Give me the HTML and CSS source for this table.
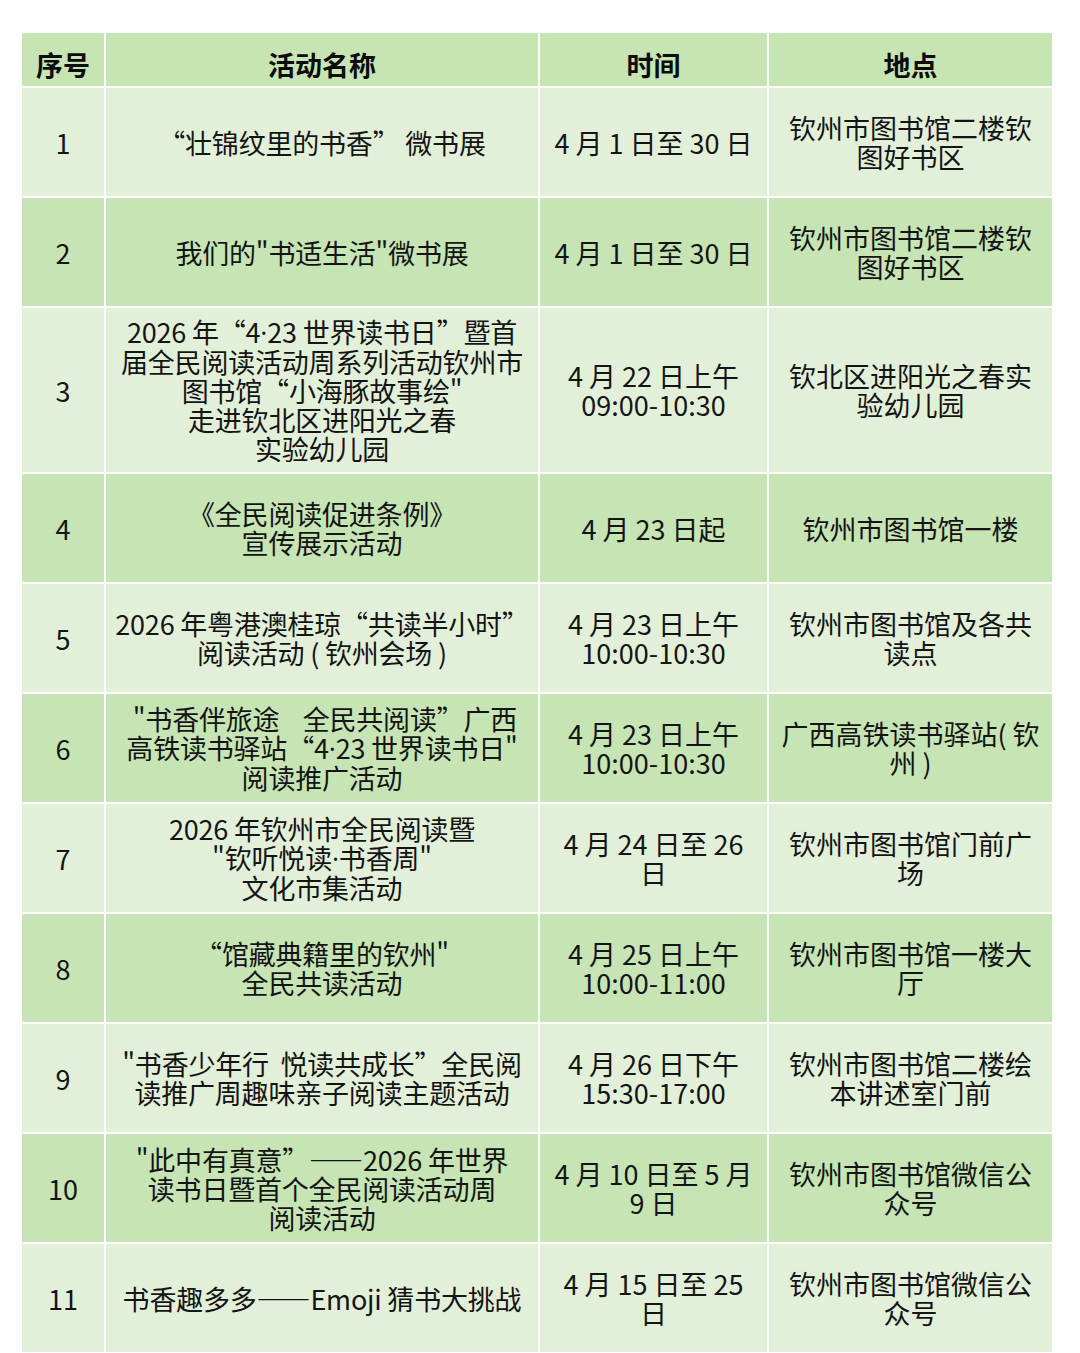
FILE: index.html
```html
<!DOCTYPE html>
<html lang="zh-CN">
<head>
<meta charset="utf-8">
<link rel="stylesheet" href="styles.css">
</head>
<body>
<table class="events">
  <colgroup>
    <col class="c-no"><col class="c-name"><col class="c-time"><col class="c-place">
  </colgroup>
  <thead>
    <tr class="head"><th>序号</th><th>活动名称</th><th>时间</th><th>地点</th></tr>
  </thead>
  <tbody>
    <tr class="light"><td>1</td><td>“壮锦纹里的书香”&nbsp;微书展</td><td>4 月 1 日至 30 日</td><td>钦州市图书馆二楼钦<br>图好书区</td></tr>
    <tr class="dark"><td>2</td><td>我们的"书适生活"微书展</td><td>4 月 1 日至 30 日</td><td>钦州市图书馆二楼钦<br>图好书区</td></tr>
    <tr class="light tall"><td>3</td><td>2026 年“4<span class="dot">·</span>23 世界读书日”暨首<br>届全民阅读活动周系列活动钦州市<br>图书馆“小海豚故事绘"<br>走进钦北区进阳光之春<br>实验幼儿园</td><td>4 月 22 日上午<br>09:00-10:30</td><td>钦北区进阳光之春实<br>验幼儿园</td></tr>
    <tr class="dark"><td>4</td><td>《全民阅读促进条例》<br>宣传展示活动</td><td>4 月 23 日起</td><td>钦州市图书馆一楼</td></tr>
    <tr class="light"><td>5</td><td>2026 年粤港澳桂琼“共读半小时”<br>阅读活动 ( 钦州会场 )</td><td>4 月 23 日上午<br>10:00-10:30</td><td>钦州市图书馆及各共<br>读点</td></tr>
    <tr class="dark"><td>6</td><td>&nbsp;"书香伴旅途&nbsp;&nbsp;&nbsp;&nbsp;全民共阅读”广西<br>高铁读书驿站“4<span class="dot">·</span>23 世界读书日"<br>阅读推广活动</td><td>4 月 23 日上午<br>10:00-10:30</td><td>广西高铁读书驿站( 钦<br>州 )</td></tr>
    <tr class="light"><td>7</td><td>2026 年钦州市全民阅读暨<br>"钦听悦读<span class="dot">·</span>书香周"<br>文化市集活动</td><td>4 月 24 日至 26<br>日</td><td>钦州市图书馆门前广<br>场</td></tr>
    <tr class="dark"><td>8</td><td>“馆藏典籍里的钦州"<br>全民共读活动</td><td>4 月 25 日上午<br>10:00-11:00</td><td>钦州市图书馆一楼大<br>厅</td></tr>
    <tr class="light"><td>9</td><td>"书香少年行&nbsp;&nbsp;悦读共成长”全民阅<br>读推广周趣味亲子阅读主题活动</td><td>4 月 26 日下午<br>15:30-17:00</td><td>钦州市图书馆二楼绘<br>本讲述室门前</td></tr>
    <tr class="dark"><td>10</td><td>"此中有真意”——2026 年世界<br>读书日暨首个全民阅读活动周<br>阅读活动</td><td>4 月 10 日至 5 月<br>9 日</td><td>钦州市图书馆微信公<br>众号</td></tr>
    <tr class="light"><td>11</td><td>书香趣多多——Emoji 猜书大挑战</td><td>4 月 15 日至 25<br>日</td><td>钦州市图书馆微信公<br>众号</td></tr>
  </tbody>
</table>
</body>
</html>
```
FILE: styles.css
```css
html, body {
  margin: 0;
  padding: 0;
  background: #ffffff;
}
body {
  padding: 33px 0 0 22px;
  font-family: "Noto Sans CJK SC", "Noto Sans", sans-serif;
  color: #141414;
}
.events {
  border-collapse: collapse;
  table-layout: fixed;
  width: 1030px;
}
.c-no { width: 83px; }
.c-name { width: 434px; }
.c-time { width: 229px; }
.c-place { width: 284px; }
.events th,
.events td {
  border: 2px solid #ffffff;
  padding: 0;
  text-align: center;
  vertical-align: middle;
  white-space: nowrap;
  overflow: visible;
}
.events tr:first-child th,
.events tr:first-child td { border-top: 0; }
.events th:first-child,
.events td:first-child { border-left: 0; }
.events th:last-child,
.events td:last-child { border-right: 0; }
.events th {
  height: 43px;
  padding-top: 10px;
  font-size: 27px;
  font-weight: 700;
  line-height: 30px;
  color: #0c0c0c;
}
.events td {
  height: 108px;
  font-size: 27px;
  line-height: 29px;
  font-weight: 400;
}
.events td:nth-child(2) { letter-spacing: -0.2px; }
.events tr.tall td { height: 164px; }
.dot { font-family: "Open Sans", sans-serif; }
.head { background: #c6e5b3; }
.light { background: #e3f0d9; }
.dark { background: #c6e4b4; }
```
